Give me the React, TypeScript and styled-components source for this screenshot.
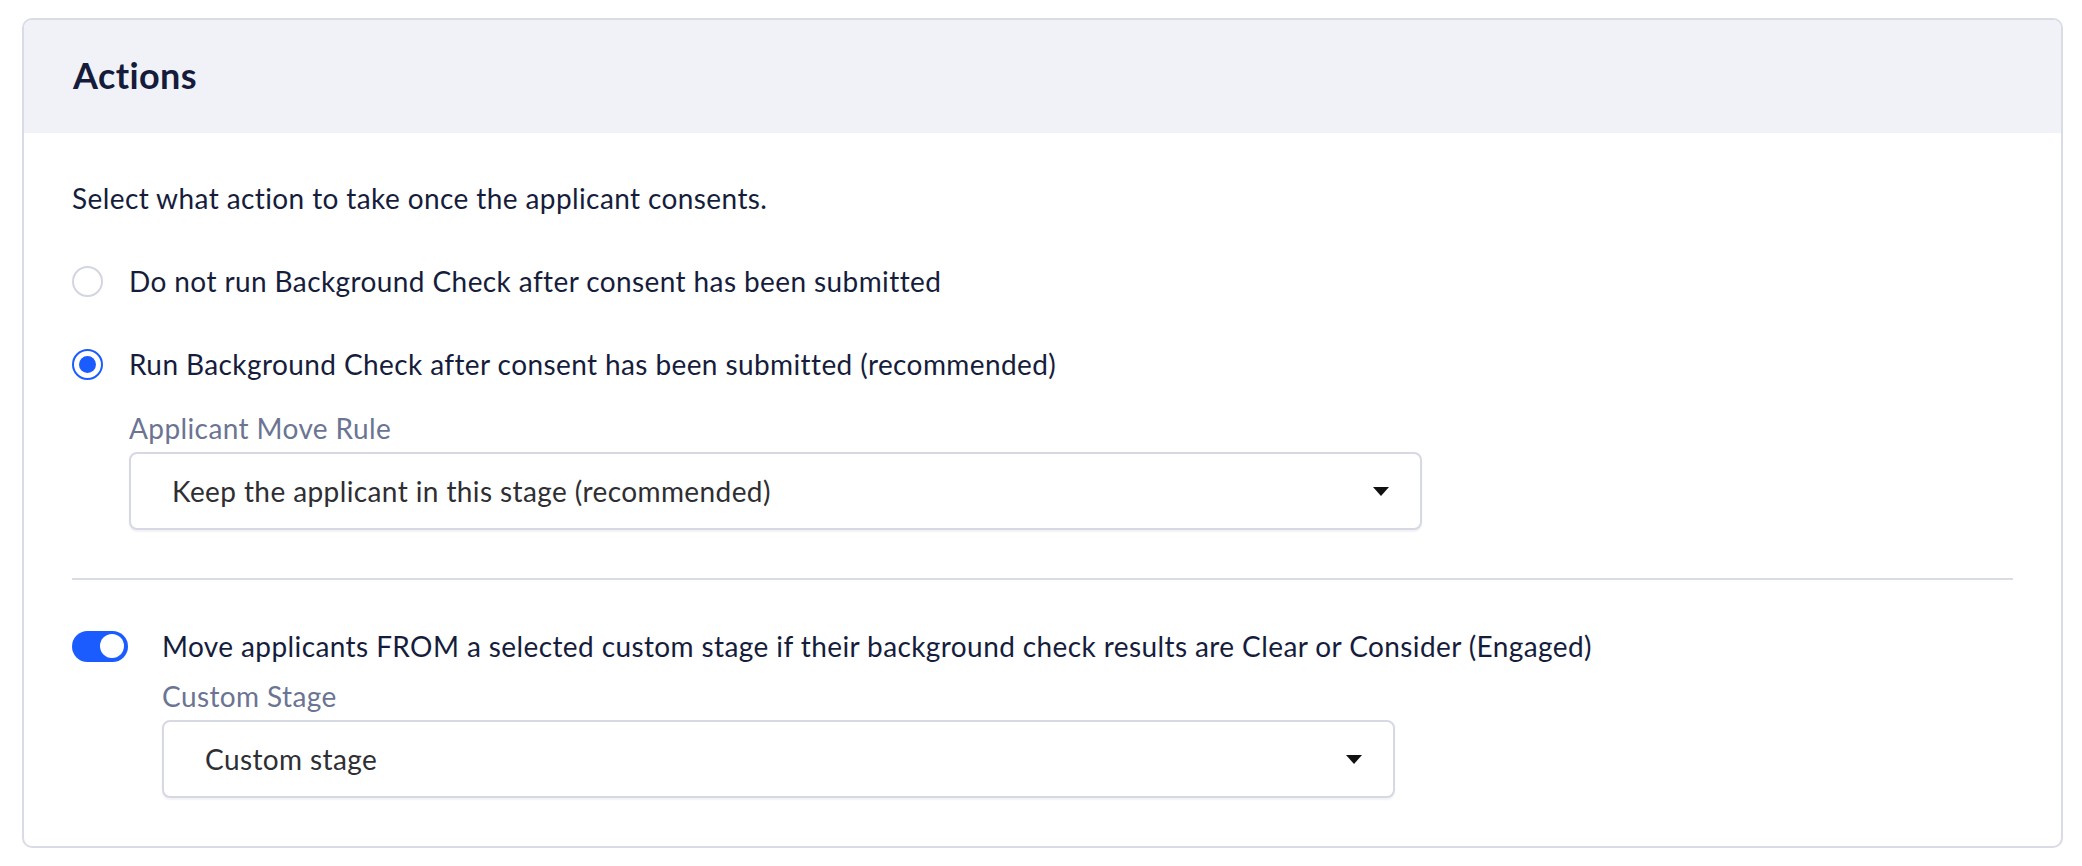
import React from 'react';
import styled, { createGlobalStyle } from 'styled-components';

const GlobalStyle = createGlobalStyle`
    body {
        margin: 0;
        background: #ffffff;
        font-family: Lato, "Noto Sans", sans-serif;
        -webkit-font-smoothing: antialiased;
    }
`;

const Page = styled.div`
    padding: 18px 19px 16px 22px;
`;

const Card = styled.section`
    border: 2px solid #d9dbe6;
    border-radius: 10px;
    overflow: hidden;
    background: #ffffff;
`;

const CardHeader = styled.header`
    height: 113px;
    box-sizing: border-box;
    display: flex;
    align-items: center;
    padding: 0 49px 4px 49px;
    background-color: #f1f2f7;
`;

const Title = styled.h2`
    margin: 0;
    font-size: 36px;
    font-weight: 700;
    letter-spacing: 0.4px;
    color: #151c3b;
`;

const CardBody = styled.div`
    padding: 45px 48px 48px 48px;
    display: flex;
    flex-direction: column;
`;

const Text = styled.p`
    margin: 0;
    font-size: 28px;
    line-height: 40px;
    letter-spacing: 0.4px;
    color: #161d3c;
`;

const RadioRow = styled.label`
    display: flex;
    align-items: center;
    gap: 26px;
    margin-top: 43px;
    cursor: pointer;
`;

const RadioCircle = styled.span<{ $checked?: boolean }>`
    width: 31px;
    height: 31px;
    box-sizing: border-box;
    border-radius: 50%;
    border: 2px solid ${(p) => (p.$checked ? '#1a5cff' : '#d3d6e2')};
    display: flex;
    align-items: center;
    justify-content: center;
    flex-shrink: 0;

    &::after {
        content: '';
        width: 17px;
        height: 17px;
        border-radius: 50%;
        background: ${(p) => (p.$checked ? '#1a5cff' : 'transparent')};
    }
`;

const Field = styled.div<{ $indent: number; $top: number }>`
    display: flex;
    flex-direction: column;
    gap: 4px;
    margin-left: ${(p) => p.$indent}px;
    margin-top: ${(p) => p.$top}px;
`;

const FieldLabel = styled.span`
    font-size: 28px;
    line-height: 40px;
    letter-spacing: 0.4px;
    color: #6b7493;
`;

const SelectBox = styled.div<{ $width: number }>`
    width: ${(p) => p.$width}px;
    height: 78px;
    box-sizing: border-box;
    border: 2px solid #d6d9e4;
    border-radius: 8px;
    box-shadow: 0 2px 2px rgba(30, 40, 80, 0.06);
    display: flex;
    align-items: center;
    justify-content: space-between;
    padding: 0 31px 0 41px;
    background: #ffffff;
`;

const SelectValue = styled.span`
    font-size: 28px;
    letter-spacing: 0.4px;
    color: #2e2e33;
`;

const Divider = styled.hr`
    border: none;
    height: 2px;
    background: #d9dbe5;
    margin: 48px 0 0 0;
`;

const ToggleRow = styled.div`
    display: flex;
    align-items: center;
    gap: 34px;
    margin-top: 46px;
`;

const Toggle = styled.span<{ $on?: boolean }>`
    width: 56px;
    height: 31px;
    box-sizing: border-box;
    border-radius: 16px;
    background: ${(p) => (p.$on ? '#1a5cff' : '#d3d6e2')};
    display: flex;
    align-items: center;
    justify-content: ${(p) => (p.$on ? 'flex-end' : 'flex-start')};
    padding: 0 4px;
    flex-shrink: 0;
`;

const Knob = styled.span`
    width: 24px;
    height: 24px;
    border-radius: 50%;
    background: #ffffff;
`;

const Caret = () => (
    <svg width="16" height="9" viewBox="0 0 16 9">
        <path d="M0 0 H16 L8 9 Z" fill="#111111" />
    </svg>
);

const Select = ({ value, width }: { value: string; width: number }) => (
    <SelectBox $width={width}>
        <SelectValue>{value}</SelectValue>
        <Caret />
    </SelectBox>
);

export default function App() {
    return (
        <>
            <GlobalStyle />
            <Page>
                <Card>
                    <CardHeader>
                        <Title>Actions</Title>
                    </CardHeader>
                    <CardBody>
                        <Text>Select what action to take once the applicant consents.</Text>

                        <RadioRow>
                            <RadioCircle />
                            <Text>Do not run Background Check after consent has been submitted</Text>
                        </RadioRow>
                        <RadioRow>
                            <RadioCircle $checked />
                            <Text>Run Background Check after consent has been submitted (recommended)</Text>
                        </RadioRow>

                        <Field $indent={57} $top={24}>
                            <FieldLabel>Applicant Move Rule</FieldLabel>
                            <Select value="Keep the applicant in this stage (recommended)" width={1293} />
                        </Field>

                        <Divider />

                        <ToggleRow>
                            <Toggle $on>
                                <Knob />
                            </Toggle>
                            <Text>
                                Move applicants FROM a selected custom stage if their background check results are Clear or Consider (Engaged)
                            </Text>
                        </ToggleRow>

                        <Field $indent={90} $top={10}>
                            <FieldLabel>Custom Stage</FieldLabel>
                            <Select value="Custom stage" width={1233} />
                        </Field>
                    </CardBody>
                </Card>
            </Page>
        </>
    );
}
